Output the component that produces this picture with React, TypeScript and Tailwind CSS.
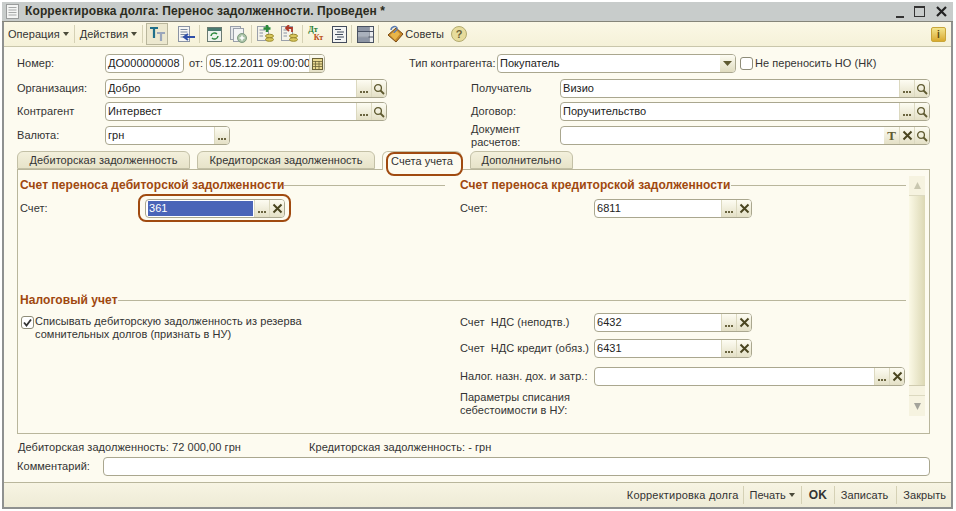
import React from "react";

const Dots = () => (
  <span className="flex w-[15px] h-full items-end justify-center pb-[4px] gap-[1px] border-l border-[#dcd9c0] bg-gradient-to-b from-[#fdfcf2] to-[#e4e0c6]">
    <i className="w-[2px] h-[2px] bg-[#6b6540]" />
    <i className="w-[2px] h-[2px] bg-[#6b6540]" />
    <i className="w-[2px] h-[2px] bg-[#6b6540]" />
  </span>
);
const XBtn = () => (
  <span className="flex w-[15px] h-full items-center justify-center border-l border-[#dcd9c0] bg-gradient-to-b from-[#fdfcf2] to-[#e4e0c6]">
    <svg width="11" height="11" viewBox="0 0 11 11"><path d="M1.5 1.5 9.500 9.500M9.500 1.500 1.500 9.500" stroke="#4a4520" strokeWidth="2" /></svg>
  </span>
);
const Search = () => (
  <span className="flex w-[15px] h-full items-center justify-center border-l border-[#dcd9c0] bg-gradient-to-b from-[#fdfcf2] to-[#e4e0c6]">
    <svg width="12" height="12" viewBox="0 0 12 12" fill="none"><circle cx="5" cy="5" r="3.4" stroke="#5f5a30" strokeWidth="1.3" /><path d="M7.5 7.5 11 11" stroke="#5f5a30" strokeWidth="1.8" /></svg>
  </span>
);
const TBtn = () => (
  <span className="flex w-[15px] h-full items-center justify-center bg-gradient-to-b from-[#fdfcf2] to-[#e4e0c6] font-['Liberation_Serif',serif] font-bold text-[13px] text-[#5f5a30]">T</span>
);
const Cal = () => (
  <span className="flex w-[15px] h-full items-center justify-center border-l border-[#dcd9c0] bg-gradient-to-b from-[#fdfcf2] to-[#e4e0c6]">
    <svg width="11" height="12" viewBox="0 0 11 12"><rect x="0.5" y="0.5" width="10" height="11" fill="#e8d890" stroke="#6b6237" /><path d="M0 3.5H11M0 6H11M0 8.5H11M3.5 3V12M7 3V12" stroke="#6b6237" strokeWidth="0.8" /></svg>
  </span>
);
const Arrow = () => (
  <span className="flex w-[15px] h-full items-center justify-center bg-gradient-to-b from-[#fdfcf2] to-[#e0dcbf]">
    <svg width="9" height="5" viewBox="0 0 9 5"><path d="M0 0H9L4.500 5Z" fill="#5f5a30" /></svg>
  </span>
);

function Field({ w, value, children, selected }: { w: string; value?: string; children?: React.ReactNode; selected?: boolean }) {
  return (
    <div className={`flex h-[19px] shrink-0 items-center rounded-[4px] border border-[#aaa78f] bg-white overflow-hidden ${w}`}>
      <div className="flex-1 min-w-0 pl-[2px] pr-[1px] h-full flex items-center whitespace-nowrap">
        {selected ? (
          <span className="flex items-center w-full h-[15px] bg-[#4a64b8] text-white pl-[1px]">{value}</span>
        ) : (
          <span className="text-[#222]">{value}</span>
        )}
      </div>
      {children}
    </div>
  );
}

const Caret = () => (
  <svg width="6" height="4" viewBox="0 0 6 4" className="ml-[3px]"><path d="M0 0H6L3 4Z" fill="#4a4a3a" /></svg>
);
const Sep = () => <span className="w-px h-[18px] bg-[#d5d1b5] mx-[4px] shrink-0" />;

const DocLines = ({ c = "#7b8aa0" }: { c?: string }) => (
  <>
    <rect x="1.500" y="0.500" width="11" height="15" fill="#f6f6f4" stroke="#8a93a3" />
    <path d="M3.500 3.500H10.500M3.500 6H10.500M3.500 8.500H9M3.500 11H8" stroke={c} />
  </>
);

function Toolbar() {
  return (
    <div className="flex items-center h-[25px] border-b border-[#c9c6ab] bg-gradient-to-b from-[#fbf8e6] to-[#f5f1d8] pl-[4px] pr-[5px]">
      <span className="flex items-center">Операция<Caret /></span>
      <span className="w-px h-[18px] bg-[#d5d1b5] ml-[5px] mr-[5px]" />
      <span className="flex items-center">Действия<Caret /></span>
      <span className="w-px h-[18px] bg-[#d5d1b5] ml-[5px] mr-[3px]" />
      <span className="flex items-center justify-center w-[22px] h-[22px] border border-[#b9b69c] bg-[#ece8cf]">
        <svg width="17" height="15" viewBox="0 0 17 15"><path d="M1 1H9M5 1V11" stroke="#1f6f8a" strokeWidth="2.2" /><path d="M8 6H16M12 6V14" stroke="#9aa6bb" strokeWidth="2.200" /></svg>
      </span>
      <span className="ml-[9px] w-[18px] h-[16px] flex">
        <svg width="18" height="16" viewBox="0 0 18 16"><DocLines /><path d="M18 11H8M11 8 7 11l4 3" stroke="#2f4fa8" strokeWidth="2" fill="none" /></svg>
      </span>
      <Sep />
      <span className="ml-[3px] w-[15px] h-[15px] flex">
        <svg width="15" height="15" viewBox="0 0 15 15"><rect x="0.500" y="0.500" width="14" height="14" fill="#eef3ee" stroke="#6a7a72" /><rect x="1" y="1" width="13" height="3" fill="#4a7a70" /><path d="M4 9a3.500 3.500 0 0 1 6-2M11 9a3.500 3.500 0 0 1-6 2" stroke="#2f8a3f" strokeWidth="1.500" fill="none" /></svg>
      </span>
      <span className="ml-[8px] w-[17px] h-[17px] flex">
        <svg width="17" height="17" viewBox="0 0 17 17"><rect x="0.500" y="0.500" width="10" height="13" fill="#e6e8ea" stroke="#9aa0aa" /><rect x="3.500" y="2.500" width="10" height="13" fill="#f3f4f5" stroke="#9aa0aa" /><circle cx="12" cy="12" r="4.500" fill="#a9c3a6" stroke="#7f9a80" /><path d="M12 9.500v5M9.500 12h5" stroke="#fff" strokeWidth="1.500" /></svg>
      </span>
      <Sep />
      <span className="ml-[1px] w-[17px] h-[18px] flex">
        <svg width="17" height="18" viewBox="0 0 17 18"><rect x="0.500" y="1.500" width="11" height="14" fill="#f4f3ea" stroke="#9aa0aa" /><path d="M2.500 5H8M2.500 8H6M2.500 11H6" stroke="#8a93a3" /><path d="M10 0v7M6.500 3.500h7" stroke="#2c8a3a" strokeWidth="2.500" /><ellipse cx="12.500" cy="11" rx="4" ry="1.800" fill="#d9c75c" stroke="#9a8a2c" /><ellipse cx="12.500" cy="14.500" rx="4" ry="1.800" fill="#d9c75c" stroke="#9a8a2c" /></svg>
      </span>
      <span className="ml-[7px] w-[17px] h-[18px] flex">
        <svg width="17" height="18" viewBox="0 0 17 18"><rect x="0.500" y="1.500" width="11" height="14" fill="#f4f3ea" stroke="#9aa0aa" /><path d="M2.500 5H6M2.500 8H6M2.500 11H6" stroke="#8a93a3" /><path d="M11 7V3H6M8 0 5 3l3 3" stroke="#b03a2a" strokeWidth="1.800" fill="none" /><ellipse cx="12.500" cy="11" rx="4" ry="1.800" fill="#d9c75c" stroke="#9a8a2c" /><ellipse cx="12.500" cy="14.500" rx="4" ry="1.800" fill="#d9c75c" stroke="#9a8a2c" /></svg>
      </span>
      <Sep />
      <span className="ml-[1px] w-[15px] flex flex-col font-bold text-[8px] leading-[8px] font-['Liberation_Serif',serif]">
        <span className="text-[#1d7a30] self-start h-[8px]">Дт</span>
        <span className="text-[#b8480f] self-end h-[8px]">Кт</span>
      </span>
      <span className="ml-[9px] w-[15px] h-[17px] flex">
        <svg width="15" height="17" viewBox="0 0 15 17"><rect x="0.500" y="0.500" width="14" height="16" fill="#f3f4f3" stroke="#444c5c" /><path d="M3 3.500h6M5 6h7M3 8.500h8M5 11h7M3 13.500h6" stroke="#3f4a5c" /></svg>
      </span>
      <Sep />
      <span className="ml-[1px] w-[17px] h-[17px] flex">
        <svg width="17" height="17" viewBox="0 0 17 17"><rect x="0.500" y="0.500" width="16" height="16" fill="#e9ebee" stroke="#4a5262" /><path d="M0 5.500h17M0 11h17M12 0v17" stroke="#4a5262" /><rect x="1" y="1" width="11" height="4" fill="#8d95a4" /><rect x="1" y="6" width="11" height="4.500" fill="#aab1bc" /><rect x="1" y="11.500" width="11" height="4.500" fill="#8d95a4" /></svg>
      </span>
      <Sep />
      <span className="ml-[4px] w-[17px] h-[18px] flex">
        <svg width="17" height="18" viewBox="0 0 17 18"><path d="M1 10 9 3l7 6-7 8Z" fill="#c8892a" stroke="#7a4a12" /><path d="M3 10 9 5l4 4-5 6Z" fill="#e9b54a" /><path d="M4 5c0-3 5-5 6-2s-3 3-3 5" stroke="#5a7ab0" strokeWidth="1.500" fill="none" /></svg>
      </span>
      <span className="ml-[1px]">Советы</span>
      <span className="ml-[7px] flex items-center justify-center w-[16px] h-[16px] rounded-full border border-[#b3ab70] bg-[#e7dc9c] text-[#6b6237] font-bold text-[11px]">?</span>
      <span className="ml-auto flex items-center justify-center w-[15px] h-[15px] rounded-[2px] bg-gradient-to-b from-[#f3e58a] to-[#d9aa2c] border border-[#c9a63a] text-[#5a4a10] text-[10px] font-bold">i</span>
    </div>
  );
}

const Tab = ({ label, w, active, ring }: { label: string; w: string; active?: boolean; ring?: boolean }) => (
  <div className={`relative flex items-center justify-center rounded-t-[6px] border border-[#c3c0a6] ${w} ${active ? "h-[19px] border-b-0 bg-[#fdfbf0] -mb-px z-10" : "h-[18px] bg-gradient-to-b from-[#f3f0dc] to-[#e7e3c9]"}`}>
    {label}
    {ring && <span className="absolute left-[3px] right-[-2px] top-0 bottom-[-6px] rounded-[8px] border-[2px] border-[#a04a10]" />}
  </div>
);

const Heading = ({ children }: { children: React.ReactNode }) => (
  <div className="flex items-center h-[13px]">
    <span className="font-bold text-[12px] text-[#a0480f] tracking-[0.07px] whitespace-nowrap">{children}</span>
    <span className="flex-1 h-px bg-[#b9b69c]" />
  </div>
);

const AccountRow = ({ label, value, w = "w-[158px]" }: { label: string; value?: string; w?: string }) => (
  <div className="flex items-center">
    <span className="w-[134px] shrink-0 whitespace-pre">{label}</span>
    <Field w={w} value={value}><Dots /><XBtn /></Field>
  </div>
);

export default function App() {
  return (
    <div className="w-[956px] h-[511px] bg-white pt-[2px] pr-[3px] pl-[2px] pb-[2px] font-['Liberation_Sans',sans-serif] text-[11px] leading-[13px] tracking-[0.05px] text-[#333]">
      <div className="flex flex-col h-full border-x-[2px] border-b-[2px] border-[#8f9190] bg-[#fdfbf0]">
        {/* title bar */}
        <div className="flex items-center h-[20px] bg-[#c8cccb] -mx-[2px] pl-[4px] pr-[6px] border-b border-[#85857a]">
          <svg width="13" height="15" viewBox="0 0 13 15"><rect x="0.500" y="0.500" width="12" height="14" fill="#f4f5f4" stroke="#9a9c9c" /><path d="M2.500 3.500h8M2.500 6h8M2.500 8.500h8M2.500 11h8" stroke="#a6a8a8" /></svg>
          <span className="ml-[6px] font-bold text-[12px] text-[#2b2b20] tracking-[0.13px]">Корректировка долга: Перенос задолженности. Проведен *</span>
          <span className="ml-auto flex items-center gap-[10px]">
            <span className="w-[8px] h-[2px] bg-[#333] mt-[10px]" />
            <span className="w-[11px] h-[11px] border-[1.500px] border-[#333] border-t-[2px]" />
            <svg width="11" height="11" viewBox="0 0 11 11" className="ml-[1px]"><path d="M1 1 10 10M10 1 1 10" stroke="#222" strokeWidth="2.200" /></svg>
          </span>
        </div>
        <Toolbar />
        {/* form */}
        <div className="flex flex-col flex-1 pl-[13px] pr-[21px]">
          <div className="flex mt-[7px]">
            {/* left */}
            <div className="w-[392px] shrink-0 flex flex-col">
              <div className="flex items-center">
                <span className="w-[88px]">Номер:</span>
                <Field w="w-[79px]" value="ДО000000008" />
                <span className="ml-[5px] mr-[3px]">от:</span>
                <Field w="w-[119px]" value="05.12.2011 09:00:00"><Cal /></Field>
              </div>
              <div className="flex items-center mt-[6px]">
                <span className="w-[88px]">Организация:</span>
                <Field w="w-[282px]" value="Добро"><Dots /><Search /></Field>
              </div>
              <div className="flex items-center mt-[4px]">
                <span className="w-[88px]">Контрагент</span>
                <Field w="w-[282px]" value="Интервест"><Dots /><Search /></Field>
              </div>
              <div className="flex items-center mt-[5px]">
                <span className="w-[88px]">Валюта:</span>
                <Field w="w-[125px]" value="грн"><Dots /></Field>
              </div>
            </div>
            {/* right */}
            <div className="flex-1 flex flex-col">
              <div className="flex items-center">
                <span className="w-[88px] whitespace-nowrap">Тип контрагента:</span>
                <Field w="w-[239px]" value="Покупатель"><Arrow /></Field>
                <span className="ml-[4px] w-[13px] h-[13px] rounded-[3px] border border-[#8e8c78] bg-white" />
                <span className="ml-[2px] whitespace-nowrap">Не переносить НО (НК)</span>
              </div>
              <div className="flex items-center mt-[6px] pl-[62px]">
                <span className="w-[89px]">Получатель</span>
                <Field w="flex-1" value="Визио"><Dots /><Search /></Field>
              </div>
              <div className="flex items-center mt-[4px] pl-[62px]">
                <span className="w-[89px]">Договор:</span>
                <Field w="flex-1" value="Поручительство"><Dots /><Search /></Field>
              </div>
              <div className="flex items-center h-[19px] mt-[5px] pl-[62px]">
                <span className="w-[89px]">Документ расчетов:</span>
                <Field w="flex-1"><TBtn /><XBtn /><Search /></Field>
              </div>
            </div>
          </div>
          {/* tabs */}
          <div className="flex items-end mt-[6px] gap-[7px]">
            <Tab label="Дебиторская задолженность" w="w-[173px]" />
            <Tab label="Кредиторская задолженность" w="w-[178px]" />
            <Tab label="Счета учета" w="w-[80px]" active ring />
            <Tab label="Дополнительно" w="w-[103px] ml-[1px]" />
          </div>
          <div className="flex h-[265px] shrink-0 border border-[#b9b69c] pl-[2px]">
            <div className="w-[886px] shrink-0 flex flex-col pt-[9px]">
              <div className="flex gap-[15px]">
                <div className="w-[425px] shrink-0">
                  <Heading>Счет переноса дебиторской задолженности</Heading>
                  <div className="flex items-center mt-[7px]">
                    <span className="w-[125px] shrink-0">Счет:</span>
                    <div className="relative">
                      <Field w="w-[140px]" value="361" selected><Dots /><XBtn /></Field>
                      <span className="absolute -left-[7px] -right-[6px] -top-[5px] -bottom-[4px] rounded-[8px] border-[2px] border-[#a04a10]" />
                    </div>
                  </div>
                </div>
                <div className="flex-1">
                  <Heading>Счет переноса кредиторской задолженности</Heading>
                  <div className="mt-[7px]"><AccountRow label="Счет:" value="6811" /></div>
                </div>
              </div>
              <div className="mt-[76px]"><Heading>Налоговый учет</Heading></div>
              <div className="flex gap-[15px] mt-[6px]">
                <div className="w-[425px] shrink-0 flex items-start pt-[2px]">
                  <span className="ml-[1px] mt-[1px] flex items-center justify-center w-[13px] h-[13px] rounded-[3px] border border-[#8e8c78] bg-white shrink-0">
                    <svg width="9" height="9" viewBox="0 0 9 9" fill="none"><path d="M1 4.500 3.500 7.500 8 1.500" stroke="#333" strokeWidth="1.800" /></svg>
                  </span>
                  <span className="ml-[1px] leading-[13px]">Списывать дебиторскую задолженность из резерва<br />сомнительных долгов (признать в НУ)</span>
                </div>
                <div className="flex-1 flex flex-col">
                  <AccountRow label="Счет  НДС (неподтв.)" value="6432" />
                  <div className="mt-[7px]"><AccountRow label="Счет  НДС кредит (обяз.)" value="6431" /></div>
                  <div className="mt-[9px]"><AccountRow label="Налог. назн. дох. и затр.:" w="w-[311px]" /></div>
                  <div className="mt-[5px] leading-[13px]">Параметры списания<br />себестоимости в НУ:</div>
                </div>
              </div>
            </div>
            {/* scrollbar */}
            <div className="ml-[3px] mt-[6px] w-[16px] h-[240px] flex flex-col bg-[#f6f3e0]">
              <span className="h-[20px] flex items-center justify-center border-b border-[#dcd9c0]">
                <svg width="7" height="7" viewBox="0 0 7 7"><path d="M3.500 0 7 7H0Z" fill="#c9c7b0" /></svg>
              </span>
              <span className="h-[190px] border-b border-[#cfcbaf] bg-gradient-to-r from-[#fbf9e6] to-[#dcd8b4]" />
              <span className="h-[9px]" />
              <span className="flex-1 flex items-center justify-center border-t border-[#dcd9c0]">
                <svg width="7" height="7" viewBox="0 0 7 7"><path d="M0 0H7L3.500 7Z" fill="#a3a39a" /></svg>
              </span>
            </div>
          </div>
          <div className="flex mt-[7px] pl-[1px]">
            <span className="w-[291px]">Дебиторская задолженность: 72 000,00 грн</span>
            <span>Кредиторская задолженность: - грн</span>
          </div>
          <div className="flex items-center mt-[3px]">
            <span className="w-[86px] shrink-0">Комментарий:</span>
            <Field w="flex-1" />
          </div>
        </div>
        {/* footer */}
        <div className="flex items-center justify-end h-[25px] border-t border-[#b9b69c] bg-gradient-to-b from-[#f7f4e3] to-[#eeebd6] pr-[1px]">
          <span className="tracking-[0.2px]">Корректировка долга</span>
          <Sep />
          <span className="flex items-center px-[2px]">Печать<Caret /></span>
          <Sep />
          <span className="font-bold text-[12px] px-[3px] tracking-[0px]">OK</span>
          <Sep />
          <span className="pl-[2px] pr-[4px]">Записать</span>
          <Sep />
          <span className="pl-[2px] pr-[4px]">Закрыть</span>
        </div>
      </div>
    </div>
  );
}
